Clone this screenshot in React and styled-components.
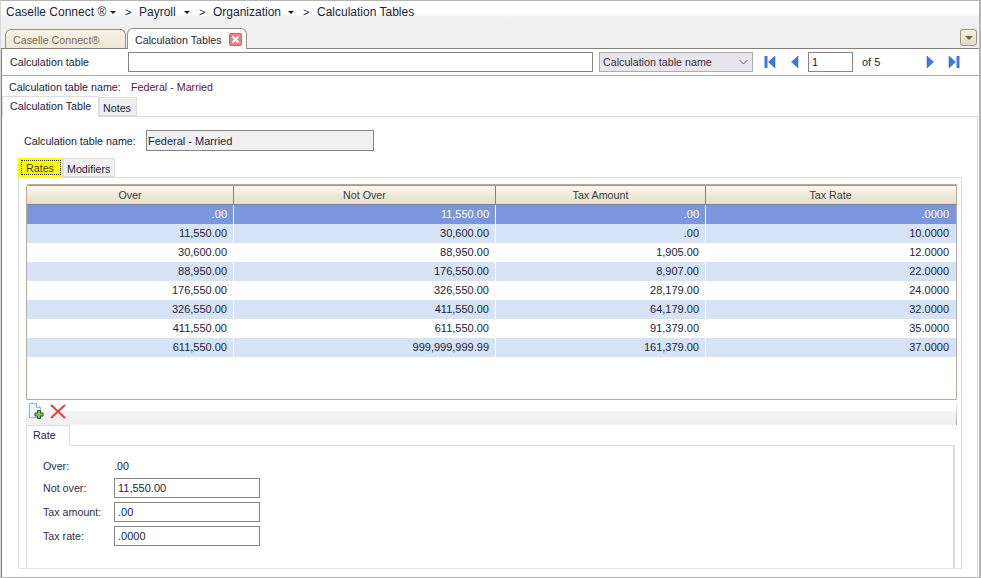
import React from "react";
import styled, { createGlobalStyle } from "styled-components";

const Global = createGlobalStyle`
  html, body { margin: 0; padding: 0; background: #fff; }
  * { box-sizing: border-box; }
`;

const Window = styled.div`
  width: 981px;
  height: 578px;
  overflow: hidden;
  display: flex;
  flex-direction: column;
  background: #fff;
  border: 1px solid #b4b4b4;
  border-left-color: #d8d8d8;
  border-right-width: 2px;
  font-family: "Liberation Sans", Arial, sans-serif;
  font-size: 10.7px;
  color: #1c2340;
`;

const Breadcrumb = styled.div`
  height: 24px;
  flex: none;
  padding: 0 0 2px 5px;
  display: flex;
  align-items: center;
  font-size: 12px;
  white-space: nowrap;
  background: linear-gradient(#fff 12px, #f0f0f0 16px);
`;

const Crumb = styled.span`
  width: ${(p) => p.$w}px;
  flex: none;
`;

const CrumbArrow = styled.span`
  width: 0;
  height: 0;
  flex: none;
  margin: 1px 9px 0 0;
  border-left: 3px solid transparent;
  border-right: 3px solid transparent;
  border-top: 3px solid #222;
`;

const CrumbSep = styled.span`
  width: 14px;
  flex: none;
  font-size: 11px;
`;

const TabStrip = styled.div`
  height: 24px;
  flex: none;
  display: flex;
  align-items: flex-end;
  gap: 1px;
  padding-left: 4px;
  background: #f0f0f0;
  border-bottom: 1px solid #8d7f73;
`;

const DocTab = styled.div`
  width: ${(p) => p.$w}px;
  height: ${(p) => (p.$active ? 21 : 20)}px;
  margin-bottom: -1px;
  display: flex;
  align-items: center;
  justify-content: space-between;
  padding: 1px 4px 0 7px;
  position: relative;
  border: 1px solid #9c8f84;
  border-bottom: ${(p) => (p.$active ? "0" : "1px solid #8d7f73")};
  border-radius: 6px 6px 0 0;
  color: ${(p) => (p.$active ? "#1c2340" : "#7d6a5c")};
  background: ${(p) =>
    p.$active ? "#fff" : "linear-gradient(#f8f3e6, #efe7d5)"};
`;

const MenuButton = styled.div`
  width: 17px;
  height: 17px;
  margin: 0 2px 2px auto;
  display: flex;
  align-items: center;
  justify-content: center;
  border: 1px solid #a29484;
  border-radius: 3px;
  background: linear-gradient(#f6f0e2, #e4dac5);
  &::after {
    content: "";
    border-left: 4px solid transparent;
    border-right: 4px solid transparent;
    border-top: 4px solid #6f6356;
  }
`;

const Content = styled.div`
  flex: 1;
  min-height: 0;
  display: flex;
  flex-direction: column;
  border-left: 1px solid #8d7f73;
`;

const Toolbar = styled.div`
  height: 27px;
  flex: none;
  display: flex;
  align-items: center;
  padding-left: 8px;
  border-bottom: 1px solid #a8a8a8;
`;

const ToolbarLabel = styled.span`
  width: 118px;
  flex: none;
`;

const Field = styled.input`
  display: block;
  width: ${(p) => p.$w}px;
  height: ${(p) => p.$h || 20}px;
  flex: none;
  margin: 0;
  padding: 0 ${(p) => (p.readOnly ? 1 : 3)}px;
  border: 1px solid #858585;
  border-radius: 0;
  outline: none;
  font: inherit;
  font-size: 11px;
  color: #1c2340;
  background: ${(p) => (p.readOnly ? "#f0f0f0" : "#fff")};
`;

const Picker = styled.div`
  width: 154px;
  height: 20px;
  flex: none;
  margin: 0 11px 0 6px;
  padding: 0 4px 0 3px;
  display: flex;
  align-items: center;
  justify-content: space-between;
  border: 1px solid #acacac;
  background: #e8e6ea;
  color: #3a3040;
`;

const NavIcon = styled.svg`
  width: 12px;
  height: 14px;
  flex: none;
  margin-right: ${(p) => p.$gap}px;
`;

const OfText = styled.span`
  width: 62px;
  flex: none;
  margin-left: 9px;
  font-size: 11px;
`;

const NameRow = styled.div`
  height: 20px;
  flex: none;
  display: flex;
  align-items: center;
  padding: 1px 0 0 7px;
`;

const NameLabel = styled.span`
  width: 122px;
  flex: none;
`;

const NameValue = styled.span`
  color: #5a2130;
`;

const TabRow = styled.div`
  height: ${(p) => p.$h}px;
  flex: none;
  display: flex;
  align-items: flex-end;
`;

const PageTab = styled.div`
  width: ${(p) => p.$w}px;
  height: ${(p) => (p.$active ? 21 : 19)}px;
  margin-bottom: ${(p) => (p.$active ? -1 : 0)}px;
  padding: ${(p) => (p.$active ? "0 0 2px" : "3px 0 0")} ${(p) => p.$pad}px;
  display: flex;
  align-items: center;
  position: relative;
  white-space: nowrap;
  border: 1px solid #dcdcdc;
  border-bottom: ${(p) => (p.$active ? "0" : "1px solid #dcdcdc")};
  background: ${(p) => (p.$active ? "#fff" : "#f0f0f0")};
`;

const MainPanel = styled.div`
  flex: 1;
  min-height: 0;
  margin-right: 1px;
  padding: 13px 15px 8px 16px;
  display: flex;
  flex-direction: column;
  border-top: 1px solid #dcdcdc;
  border-right: 1px solid #dcdcdc;
`;

const HeaderForm = styled.div`
  display: flex;
  align-items: center;
  padding-left: 6px;
  height: 21px;
  flex: none;
`;

const HeaderLabel = styled.span`
  width: 122px;
  flex: none;
  white-space: nowrap;
`;

const RatesTab = styled.div`
  width: 45px;
  height: 20px;
  margin-bottom: -1px;
  padding: 2px 1px 2px 3px;
  position: relative;
  background: #ffff00;
  border-right: 1px solid #dcdcdc;
`;

const RatesInner = styled.div`
  height: 15px;
  padding-right: 2px;
  display: flex;
  align-items: center;
  justify-content: center;
  border: 1px dotted #222;
  color: #3b3a10;
`;

const InnerPanel = styled.div`
  flex: 1;
  min-height: 0;
  padding: 6px 4px 0 7px;
  display: flex;
  flex-direction: column;
  border: 1px solid #dcdcdc;
  border-bottom: 1px solid #e6e6e6;
`;

const Grid = styled.div`
  height: 216px;
  flex: none;
  border: 1px solid #b6ab9f;
  border-radius: 3px 0 0 0;
  background: #fff;
  font-size: 11px;
  overflow: hidden;
`;

const GridRow = styled.div`
  display: grid;
  grid-template-columns: 206px 262px 210px 250px;
  height: ${(p) => (p.$head ? 20 : 19)}px;
  background: ${(p) =>
    p.$head
      ? "linear-gradient(#fbf8f0 0, #efe8d8 55%, #e4dcc8 100%)"
      : p.$selected
      ? "#7b96dd"
      : p.$alt
      ? "#d6e3f6"
      : "#fff"};
  ${(p) => p.$head && "border-bottom: 1px solid #8d7f73; border-top: 1px solid #a49688;"}
`;

const HeadCell = styled.div`
  display: flex;
  align-items: center;
  justify-content: center;
  padding-bottom: 1px;
  font-size: 10.7px;
  color: #3c3a40;
  border-left: ${(p) => (p.$first ? "0" : "1px solid #8d7f73")};
`;

const Cell = styled.div`
  display: flex;
  align-items: center;
  justify-content: flex-end;
  padding: 0 6px 1px 0;
  color: ${(p) => (p.$selected ? "#fff" : "#1c2340")};
  border-left: ${(p) => (p.$first ? "0" : "1px solid #fff")};
`;

const ActionBar = styled.div`
  height: 25px;
  flex: none;
  display: flex;
  align-items: flex-start;
  gap: 6px;
  padding: 3px 0 0 2px;
  background: linear-gradient(#fff 10px, #f3f3f3 12px, #f0f0f0 100%);
  border-right: 1px solid;
  border-image: linear-gradient(#fff, #a8a29c) 1;
`;

const DetailTabs = styled.div`
  height: 20px;
  flex: none;
  display: flex;
  align-items: flex-end;
`;

const DetailTab = styled.div`
  width: 44px;
  height: 21px;
  margin-bottom: -1px;
  padding: 0 0 2px 6px;
  display: flex;
  align-items: center;
  position: relative;
  border: 1px solid #dcdcdc;
  border-bottom: 0;
  background: #fff;
`;

const DetailPanel = styled.div`
  flex: 1;
  min-height: 0;
  margin-right: 2px;
  padding: 11px 0 0 16px;
  border: 1px solid #dcdcdc;
  border-bottom: 0;
  border-right-width: 2px;
`;

const FormRow = styled.div`
  height: ${(p) => p.$h}px;
  margin-bottom: ${(p) => p.$gap || 0}px;
  display: flex;
  align-items: center;
`;

const FormLabel = styled.span`
  width: 71px;
  flex: none;
  color: #2c3150;
`;

const FIGURES = [
  [".00", "11,550.00", ".00", ".0000"],
  ["11,550.00", "30,600.00", ".00", "10.0000"],
  ["30,600.00", "88,950.00", "1,905.00", "12.0000"],
  ["88,950.00", "176,550.00", "8,907.00", "22.0000"],
  ["176,550.00", "326,550.00", "28,179.00", "24.0000"],
  ["326,550.00", "411,550.00", "64,179.00", "32.0000"],
  ["411,550.00", "611,550.00", "91,379.00", "35.0000"],
  ["611,550.00", "999,999,999.99", "161,379.00", "37.0000"],
];

const HEADS = ["Over", "Not Over", "Tax Amount", "Tax Rate"];

const CRUMBS = [
  ["Caselle Connect ®", 104],
  ["Payroll", 45],
  ["Organization", 75],
];

const Arrow = ({ d, bar, gap }) => (
  <NavIcon viewBox="0 0 12 14" $gap={gap}>
    {bar !== undefined && <rect x={bar} y="1" width="3" height="12" fill="#3f78d8" />}
    <path d={d} fill="#3f78d8" stroke="#2a5fb8" strokeWidth="0.5" />
  </NavIcon>
);

const CloseIcon = () => (
  <svg width="13" height="13" viewBox="0 0 13 13">
    <rect x="0.5" y="0.5" width="12" height="12" rx="1.5" fill="#e88582" stroke="#b76a68" />
    <path d="M3.5 3.5l6 6M9.5 3.5l-6 6" stroke="#fff" strokeWidth="2" />
  </svg>
);

const NewIcon = () => (
  <svg width="16" height="16" viewBox="0 0 16 16">
    <path d="M1.5.5h7l4 4v10h-11z" fill="#eef4fc" stroke="#8fb2e0" />
    <path d="M8.5.5v4h4" fill="#fff" stroke="#8fb2e0" />
    <path d="M9.5 7.5h3v2.5h2.5v3H12.5v2.5h-3V13H7v-3h2.5z" fill="#7fbf6a" stroke="#2f5a2a" />
  </svg>
);

const DeleteIcon = () => (
  <svg width="16" height="16" viewBox="0 0 16 16">
    <path d="M1 2l14 13M15 2L1 15" stroke="#d84a45" strokeWidth="2.2" />
  </svg>
);

const App = () => (
  <Window>
    <Global />
    <Breadcrumb>
      {CRUMBS.map(([name, w]) => (
        <React.Fragment key={name}>
          <Crumb $w={w}>{name}</Crumb>
          <CrumbArrow />
          <CrumbSep>&gt;</CrumbSep>
        </React.Fragment>
      ))}
      <span>Calculation Tables</span>
    </Breadcrumb>

    <TabStrip>
      <DocTab $w={121}>Caselle Connect®</DocTab>
      <DocTab $w={120} $active>
        Calculation Tables
        <CloseIcon />
      </DocTab>
      <MenuButton />
    </TabStrip>

    <Content>
      <Toolbar>
        <ToolbarLabel>Calculation table</ToolbarLabel>
        <Field $w={465} defaultValue="" />
        <Picker>
          Calculation table name
          <svg width="9" height="6" viewBox="0 0 9 6">
            <path d="M.5 1l4 4 4-4" fill="none" stroke="#666" />
          </svg>
        </Picker>
        <Arrow d="M11 1v12L4.5 7z" bar={0.5} gap={13} />
        <Arrow d="M9 1v12L2.5 7z" gap={7} />
        <Field $w={45} defaultValue="1" />
        <OfText>of 5</OfText>
        <Arrow d="M3 1v12L9.5 7z" gap={12} />
        <Arrow d="M1 1v12L7.5 7z" bar={8.5} gap={0} />
      </Toolbar>

      <NameRow>
        <NameLabel>Calculation table name:</NameLabel>
        <NameValue>Federal - Married</NameValue>
      </NameRow>

      <TabRow $h={20}>
        <PageTab $w={97} $pad={7} $active>Calculation Table</PageTab>
        <PageTab $w={38} $pad={3}>Notes</PageTab>
      </TabRow>

      <MainPanel>
        <HeaderForm>
          <HeaderLabel>Calculation table name:</HeaderLabel>
          <Field $w={228} $h={21} readOnly value="Federal - Married" />
        </HeaderForm>

        <TabRow $h={26}>
          <RatesTab>
            <RatesInner>Rates</RatesInner>
          </RatesTab>
          <PageTab $w={52} $pad={3}>Modifiers</PageTab>
        </TabRow>

        <InnerPanel>
          <Grid>
            <GridRow $head>
              {HEADS.map((h, i) => (
                <HeadCell key={h} $first={i === 0}>{h}</HeadCell>
              ))}
            </GridRow>
            {FIGURES.map((row, r) => (
              <GridRow key={row[0]} $selected={r === 0} $alt={r % 2 === 1 || r === 3}>
                {row.map((v, i) => (
                  <Cell key={i} $first={i === 0} $selected={r === 0}>{v}</Cell>
                ))}
              </GridRow>
            ))}
          </Grid>

          <ActionBar>
            <NewIcon />
            <DeleteIcon />
          </ActionBar>

          <DetailTabs>
            <DetailTab>Rate</DetailTab>
          </DetailTabs>

          <DetailPanel>
            <FormRow $h={17} $gap={4}>
              <FormLabel>Over:</FormLabel>
              <span>.00</span>
            </FormRow>
            <FormRow $h={20} $gap={4}>
              <FormLabel>Not over:</FormLabel>
              <Field $w={146} defaultValue="11,550.00" />
            </FormRow>
            <FormRow $h={20} $gap={4}>
              <FormLabel>Tax amount:</FormLabel>
              <Field $w={146} defaultValue=".00" />
            </FormRow>
            <FormRow $h={20}>
              <FormLabel>Tax rate:</FormLabel>
              <Field $w={146} defaultValue=".0000" />
            </FormRow>
          </DetailPanel>
        </InnerPanel>
      </MainPanel>
    </Content>
  </Window>
);

export default App;
